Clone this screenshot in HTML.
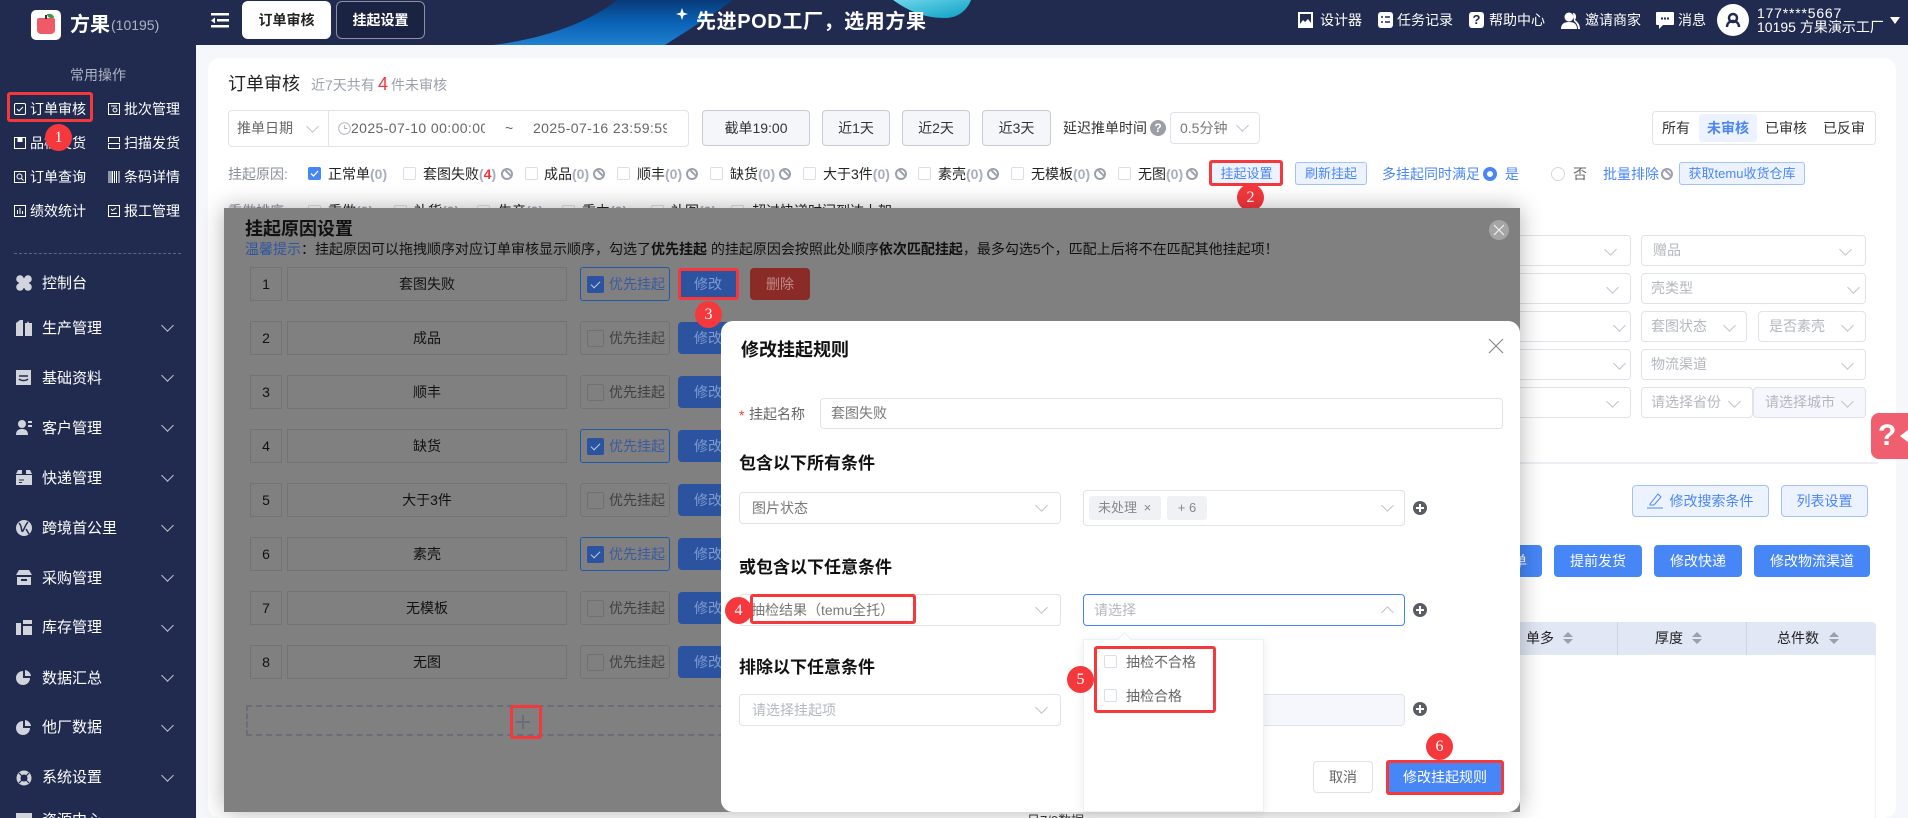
<!DOCTYPE html>
<html lang="zh"><head><meta charset="utf-8"><title>订单审核</title>
<style>
html,body{margin:0;padding:0;width:1908px;height:818px;overflow:hidden;background:#f6f7fb}
body{position:relative;font:14px/20px "Liberation Sans","Noto Sans CJK SC",sans-serif;color:#222}
.a{position:absolute;white-space:nowrap;display:block;box-sizing:border-box}
.w{color:#fff}.g{color:#8a8f9b}
.ch{width:9px;height:9px;border-right:1px solid #c0c4cc;border-bottom:1px solid #c0c4cc;transform:rotate(45deg)}
.up{transform:rotate(225deg)}
.box{border:1px solid #e1e3ea;border-radius:4px;background:#fff}
.ph{color:#b4b7bf}
.cb{width:13px;height:13px;border:1px solid #dcdfe6;border-radius:2px;background:#fff}
.cnt{color:#a7adbd;font-weight:700}
.ban{width:12px;height:12px;border:2px solid #9aa0ac;border-radius:50%;overflow:hidden}
.ban:after{content:"";position:absolute;left:-1px;top:2px;width:12px;height:2px;background:#9aa0ac;transform:rotate(45deg)}
.btn{border:1px solid #c9ccd6;border-radius:4px;background:#f5f6fa;text-align:center;color:#333}
.lb{border:1px solid #a3c2f8;border-radius:3px;background:#edf3fe;color:#4a86f7;text-align:center}
.bb{background:#4686f7;color:#fff;border-radius:4px;text-align:center}
.red{border:3px solid #f4383c;border-radius:3px}
.n{width:27px;height:27px;border-radius:50%;background:#f5383c;color:#fff;text-align:center;font:16px/27px "Liberation Serif",serif}
.m{font-size:15px;color:#fff;line-height:20px}
.mi{background:#d2d4dc}
.rb{border:1px solid #737373;color:#111;text-align:center;line-height:32px}
.ck{border:1px solid #737373;border-radius:3px;width:90px;height:34px}
.ck.on{border-color:#1f5aa6}
.c2{width:17px;height:17px;border:1px solid #707070;border-radius:2px;left:6px;top:8px}
.on .c2{background:#2c539f;border-color:#2c539f}
.on .c2:after{content:"";position:absolute;left:5px;top:2px;width:4px;height:8px;border-right:1px solid #bcd;border-bottom:1px solid #bcd;transform:rotate(45deg)}
.ct{left:28px;top:6px;color:#404040}
.on .ct{color:#3b5aa0}
.mb{background:#2c539f;color:#7f9ad0;border-radius:4px;text-align:center;line-height:32px;height:32px}
.h3{font-size:17px;font-weight:700;color:#111;line-height:24px}
.pl{width:14px;height:14px;border-radius:50%;background:#5a5d66}
.pl:before{content:"";position:absolute;left:3px;top:6px;width:8px;height:2px;background:#fff}
.pl:after{content:"";position:absolute;left:6px;top:3px;width:2px;height:8px;background:#fff}
.so{width:0;height:0;border-left:5px solid transparent;border-right:5px solid transparent;border-bottom:5px solid #9aa0ac}
.so:after{content:"";position:absolute;left:-5px;top:7px;border-left:5px solid transparent;border-right:5px solid transparent;border-top:5px solid #9aa0ac}
</style></head><body>

<!-- card -->
<div class="a" style="left:208px;top:58px;width:1688px;height:760px;background:#fff;border-radius:12px"></div>

<!-- top bar -->
<div class="a" style="left:0;top:0;width:1908px;height:45px;background:#212b50;overflow:hidden">
<svg class="a" style="left:480px;top:0" width="500" height="45" viewBox="0 0 500 45">
<defs><linearGradient id="bg" x1="0" y1="0" x2="0" y2="1"><stop offset="0" stop-color="#083a78"/><stop offset=".5" stop-color="#0a62b5"/><stop offset="1" stop-color="#2080d0"/></linearGradient>
<linearGradient id="tg" x1="0" y1="0" x2="1" y2="1"><stop offset="0" stop-color="#6fd6ea"/><stop offset="1" stop-color="#0aa0c4"/></linearGradient></defs>
<path d="M13 45C70 38 112 20 137 0H253C225 20 205 32 185 45Z" fill="url(#bg)"/>
<path d="M413 0C430 12 445 18 465 18C480 18 488 8 491 0Z" fill="url(#tg)"/>
<path d="M202 8l1.600 4.600 4.400 1.400-4.400 1.400-1.600 4.600-1.600-4.600-4.400-1.400 4.400-1.400Z" fill="#fff"/>
</svg>
<span class="a w" style="left:696px;top:8px;font-size:20px;line-height:28px;font-weight:700;letter-spacing:.6px">先进POD工厂，选用方果</span>
</div>

<!-- sidebar -->
<div class="a" style="left:0;top:0;width:196px;height:818px;background:#212b50;overflow:hidden">
<div class="a" style="left:31px;top:10px;width:30px;height:30px;background:#fff;border-radius:5px"></div>
<div class="a" style="left:37px;top:18px;width:18px;height:16px;background:#ee5b66;border-radius:2px 2px 4px 4px"></div>
<div class="a" style="left:45px;top:15px;width:2px;height:4px;background:#333"></div>
<div class="a" style="left:47px;top:14px;width:7px;height:4px;background:#3a9a4a;border-radius:0 4px 0 4px"></div>
<span class="a w" style="left:70px;top:11px;font-size:20px;line-height:28px;font-weight:700">方果</span>
<span class="a" style="left:111px;top:15px;font-size:14px;color:#aeb3c2">(10195)</span>
<span class="a" style="left:70px;top:65px;color:#aeb3c2">常用操作</span>

<svg class="a" style="left:14px;top:103px" width="12" height="12" fill="none" stroke="#fff"><rect x=".5" y=".5" width="11" height="11" rx="1.500"/><path d="M3 6l2 2 4-4"/></svg>
<span class="a w" style="left:30px;top:99px">订单审核</span>
<svg class="a" style="left:108px;top:103px" width="12" height="12" fill="none" stroke="#fff"><rect x=".5" y=".5" width="11" height="11"/><circle cx="7" cy="7" r="2"/><path d="M3 3h6"/></svg>
<span class="a w" style="left:124px;top:99px">批次管理</span>
<svg class="a" style="left:14px;top:137px" width="12" height="12" fill="none" stroke="#fff"><path d="M.5 .5h11v11H.5z"/><path d="M4 .5v4h4v-4" fill="#fff"/></svg>
<span class="a w" style="left:30px;top:133px">品检发货</span>
<svg class="a" style="left:108px;top:137px" width="12" height="12" fill="none" stroke="#fff"><path d="M.5 5V.5h11V5M.5 7.500v4h11v-4M0 6.500h12"/></svg>
<span class="a w" style="left:124px;top:133px">扫描发货</span>
<svg class="a" style="left:14px;top:171px" width="12" height="12" fill="none" stroke="#fff"><rect x=".5" y=".5" width="11" height="11"/><circle cx="5.500" cy="5.500" r="2.500"/><path d="M7.500 7.500l2 2"/></svg>
<span class="a w" style="left:30px;top:167px">订单查询</span>
<svg class="a" style="left:108px;top:171px" width="12" height="12" stroke="#fff"><path d="M1 0v12M3 0v12M4.500 0v12M6.500 0v12M8.500 0v12M11 0v12"/></svg>
<span class="a w" style="left:124px;top:167px">条码详情</span>
<svg class="a" style="left:14px;top:205px" width="12" height="12" fill="none" stroke="#fff"><rect x=".5" y=".5" width="11" height="11"/><path d="M3.500 9V5M6 9V3M8.500 9V6"/></svg>
<span class="a w" style="left:30px;top:201px">绩效统计</span>
<svg class="a" style="left:108px;top:205px" width="12" height="12" fill="none" stroke="#fff"><rect x=".5" y=".5" width="11" height="11"/><path d="M3 4l1.500 1.500L8 3M3 8.500h6"/></svg>
<span class="a w" style="left:124px;top:201px">报工管理</span>

<div class="a" style="left:14px;top:253px;width:167px;border-top:1px dashed #5d6585"></div>

<svg class="a" style="left:16px;top:275px" width="16" height="16" fill="#d2d4dc"><circle cx="4" cy="4" r="3.800"/><circle cx="12" cy="4" r="3.800"/><circle cx="4" cy="12" r="3.800"/><circle cx="12" cy="12" r="3.800"/><rect x="6" y="3" width="4" height="10"/><rect x="3" y="6" width="10" height="4"/></svg>
<span class="a m" style="left:42px;top:274px">控制台</span>
<svg class="a" style="left:16px;top:320px" width="16" height="16" fill="#d2d4dc"><path d="M0 16V3l4-3h3v16zM9 16V3h2l1-2 1 2h3v13z"/></svg>
<span class="a m" style="left:42px;top:319px">生产管理</span>
<svg class="a" style="left:16px;top:370px" width="16" height="15" fill="#d2d4dc"><path d="M0 0h15v15H0z"/><path d="M3 6h9M3 9c2 2 7 2 9 0" stroke="#212b50" fill="none" stroke-width="1.500"/></svg>
<span class="a m" style="left:42px;top:369px">基础资料</span>
<svg class="a" style="left:16px;top:420px" width="16" height="15" fill="#d2d4dc"><circle cx="6" cy="4" r="4"/><path d="M0 15c0-5 3-6 6-6s6 1 6 6zM12 1h4v2h-4zM12 5h4v2h-4z"/></svg>
<span class="a m" style="left:42px;top:419px">客户管理</span>
<svg class="a" style="left:16px;top:470px" width="16" height="15" fill="#d2d4dc"><path d="M0 4l2-4h4v4zM10 0h4l2 4h-6zM0 5h16v10H0z"/><path d="M3 10h5M3 12.500h3" stroke="#212b50"/></svg>
<span class="a m" style="left:42px;top:469px">快递管理</span>
<svg class="a" style="left:16px;top:520px" width="16" height="16" fill="#d2d4dc"><circle cx="8" cy="8" r="8"/><path d="M3 3c3 3 2 6 3 8s3-6 6-9M10 9l3 5" stroke="#212b50" stroke-width="1.500" fill="none"/></svg>
<span class="a m" style="left:42px;top:519px">跨境首公里</span>
<svg class="a" style="left:16px;top:570px" width="16" height="15" fill="#d2d4dc"><path d="M3 0h10l3 5H0zM1 7h14v8H1z"/><path d="M5 10h6" stroke="#212b50" stroke-width="2"/></svg>
<span class="a m" style="left:42px;top:569px">采购管理</span>
<svg class="a" style="left:16px;top:620px" width="16" height="15" fill="#d2d4dc"><path d="M0 3h5v12H0zM7 0h9v4H7zM7 6h9v9H7z"/></svg>
<span class="a m" style="left:42px;top:618px">库存管理</span>
<svg class="a" style="left:16px;top:670px" width="16" height="15" fill="#d2d4dc"><path d="M7 1v7h7a7 7 0 1 1-7-7zM9 0a7 7 0 0 1 6 6H9z"/></svg>
<span class="a m" style="left:42px;top:669px">数据汇总</span>
<svg class="a" style="left:16px;top:720px" width="16" height="15" fill="#d2d4dc"><path d="M7 1v7h7a7 7 0 1 1-7-7zM9 0a7 7 0 0 1 6 6H9z"/></svg>
<span class="a m" style="left:42px;top:718px">他厂数据</span>
<svg class="a" style="left:16px;top:770px" width="16" height="16" fill="none" stroke="#d2d4dc"><circle cx="8" cy="8" r="5.500" stroke-width="4"/><path d="M3 3l3 3M13 3l-3 3M3 13l3-3M13 13l-3-3" stroke="#212b50" stroke-width="1.200"/></svg>
<span class="a m" style="left:42px;top:768px">系统设置</span>
<div class="a mi" style="left:16px;top:813px;width:16px;height:10px"></div>
<span class="a m" style="left:42px;top:811px">资源中心</span>

<i class="a ch" style="left:163px;top:321px"></i><i class="a ch" style="left:163px;top:371px"></i><i class="a ch" style="left:163px;top:421px"></i><i class="a ch" style="left:163px;top:471px"></i><i class="a ch" style="left:163px;top:521px"></i><i class="a ch" style="left:163px;top:571px"></i><i class="a ch" style="left:163px;top:621px"></i><i class="a ch" style="left:163px;top:671px"></i><i class="a ch" style="left:163px;top:721px"></i><i class="a ch" style="left:163px;top:771px"></i>
</div>
<div class="a red" style="left:7px;top:92px;width:86px;height:30px"></div>
<div class="a n" style="left:45px;top:124px">1</div>

<!-- top nav -->
<svg class="a" style="left:211px;top:13px" width="18" height="15" fill="#fff"><path d="M0 0h18v2.500H0zM6 6h12v2.500H6zM0 12h18v2.500H0zM4 4.500v6L0 7.500z"/></svg>
<div class="a" style="left:242px;top:1px;width:89px;height:38px;background:#fff;border-radius:6px;text-align:center;line-height:38px;font-weight:700;color:#222">订单审核</div>
<div class="a w" style="left:336px;top:1px;width:89px;height:38px;background:#1b2343;border:1px solid #8d91a3;border-radius:6px;text-align:center;line-height:36px;font-weight:700">挂起设置</div>

<svg class="a" style="left:1298px;top:12px" width="15" height="16" fill="#fff"><path d="M0 0h15v16H0z"/><path d="M2 2h11v9l-3-4-3 3-2-2-3 4z" fill="#212b50"/></svg>
<span class="a w" style="left:1320px;top:10px">设计器</span>
<svg class="a" style="left:1378px;top:12px" width="15" height="16" fill="#fff"><rect width="15" height="16" rx="3"/><path d="M3 5h2M3 10h2M7 5h5M7 10h5" stroke="#212b50" stroke-width="1.500"/></svg>
<span class="a w" style="left:1397px;top:10px">任务记录</span>
<div class="a" style="left:1469px;top:12px;width:15px;height:16px;background:#fff;border-radius:3px;color:#212b50;text-align:center;font-weight:700;font-size:13px;line-height:16px">?</div>
<span class="a w" style="left:1489px;top:10px">帮助中心</span>
<svg class="a" style="left:1561px;top:12px" width="20" height="17" fill="#fff"><circle cx="8" cy="5" r="4.500"/><path d="M0 17c0-5 3-7 8-7s8 2 8 7z"/><path d="M12 1c3 0 4 4 2 7 3 2 5 5 5 9h-2c0-4-2-6-4-8" /></svg>
<span class="a w" style="left:1585px;top:10px">邀请商家</span>
<svg class="a" style="left:1656px;top:12px" width="18" height="17" fill="#fff"><path d="M1 0h16a1 1 0 0 1 1 1v11a1 1 0 0 1-1 1H7l-4 4v-4H1a1 1 0 0 1-1-1V1a1 1 0 0 1 1-1z"/><path d="M5 6.500h2M8 6.500h2M11 6.500h2" stroke="#212b50" stroke-width="2"/></svg>
<span class="a w" style="left:1678px;top:10px">消息</span>
<svg class="a" style="left:1717px;top:4px" width="32" height="32"><circle cx="16" cy="16" r="16" fill="#fff"/><circle cx="16" cy="14" r="4" fill="none" stroke="#212b50" stroke-width="2.500"/><path d="M10 23c0-4 3-6 6-6s6 2 6 6" fill="none" stroke="#212b50" stroke-width="2.500"/></svg>
<span class="a w" style="left:1757px;top:3px;letter-spacing:.8px">177****5667</span>
<span class="a w" style="left:1757px;top:17px">10195 方果演示工厂</span>
<svg class="a" style="left:1890px;top:17px" width="10" height="8" fill="#fff"><path d="M0 0h10L5 7z"/></svg>

<!-- header of card -->
<span class="a" style="left:228px;top:72px;font-size:18px;line-height:24px;color:#222">订单审核</span>
<span class="a g" style="left:311px;top:75px;color:#9aa0ae">近7天共有</span>
<span class="a" style="left:378px;top:72px;font-size:18px;line-height:24px;color:#f4343a">4</span>
<span class="a" style="left:391px;top:75px;color:#9aa0ae">件未审核</span>

<div class="a box" style="left:228px;top:110px;width:461px;height:37px"></div>
<div class="a" style="left:328px;top:110px;width:1px;height:37px;background:#e1e3ea"></div>
<span class="a" style="left:237px;top:118px;color:#666">推单日期</span>
<i class="a ch" style="left:308px;top:122px"></i>
<svg class="a" style="left:338px;top:122px" width="13" height="13" fill="none" stroke="#b5b8c0"><circle cx="6.500" cy="6.500" r="5.800"/><path d="M6.500 3v3.500h3"/></svg>
<div class="a" style="left:351px;top:118px;width:134px;overflow:hidden;color:#666;letter-spacing:.4px">2025-07-10 00:00:00</div>
<span class="a" style="left:505px;top:118px;color:#666">~</span>
<div class="a" style="left:533px;top:118px;width:134px;overflow:hidden;color:#666;letter-spacing:.4px">2025-07-16 23:59:59</div>

<div class="a btn" style="left:702px;top:110px;width:108px;height:36px;line-height:34px">截单19:00</div>
<div class="a btn" style="left:822px;top:110px;width:68px;height:36px;line-height:34px">近1天</div>
<div class="a btn" style="left:902px;top:110px;width:68px;height:36px;line-height:34px">近2天</div>
<div class="a btn" style="left:982px;top:110px;width:69px;height:36px;line-height:34px">近3天</div>
<span class="a" style="left:1063px;top:118px;color:#333">延迟推单时间</span>
<div class="a" style="left:1150px;top:120px;width:16px;height:16px;border-radius:50%;background:#9a9ea8;color:#fff;text-align:center;font-size:12px;line-height:16px;font-weight:700">?</div>
<div class="a box" style="left:1170px;top:112px;width:90px;height:32px;line-height:30px;padding-left:9px;color:#777">0.5分钟</div>
<i class="a ch" style="left:1238px;top:121px"></i>

<div class="a box" style="left:1652px;top:111px;width:224px;height:34px"></div>
<div class="a" style="left:1699px;top:114px;width:58px;height:28px;background:#edf3fe;border-radius:3px"></div>
<span class="a" style="left:1662px;top:118px;color:#333">所有</span>
<span class="a" style="left:1707px;top:118px;color:#4a86f7;font-weight:700">未审核</span>
<span class="a" style="left:1765px;top:118px;color:#333">已审核</span>
<span class="a" style="left:1823px;top:118px;color:#333">已反审</span>

<!-- hang reasons -->
<span class="a" style="left:228px;top:164px;color:#8a8f9b">挂起原因:</span>
<div class="a" style="left:308px;top:167px;width:13px;height:13px;background:#4686f7;border-radius:2px"></div>
<svg class="a" style="left:308px;top:167px" width="13" height="13" fill="none" stroke="#fff" stroke-width="1.300"><path d="M3 6.500l2.500 2.500L10 4"/></svg>
<span class="a" style="left:328px;top:164px">正常单<span class="cnt">(0)</span></span>
<i class="a cb" style="left:403px;top:167px"></i><span class="a" style="left:423px;top:164px">套图失败<span class="cnt">(</span><b style="color:#f4343a">4</b><span class="cnt">)</span></span><i class="a ban" style="left:501px;top:168px"></i>
<i class="a cb" style="left:525px;top:167px"></i><span class="a" style="left:544px;top:164px">成品<span class="cnt">(0)</span></span><i class="a ban" style="left:593px;top:168px"></i>
<i class="a cb" style="left:617px;top:167px"></i><span class="a" style="left:637px;top:164px">顺丰<span class="cnt">(0)</span></span><i class="a ban" style="left:686px;top:168px"></i>
<i class="a cb" style="left:710px;top:167px"></i><span class="a" style="left:730px;top:164px">缺货<span class="cnt">(0)</span></span><i class="a ban" style="left:779px;top:168px"></i>
<i class="a cb" style="left:803px;top:167px"></i><span class="a" style="left:823px;top:164px">大于3件<span class="cnt">(0)</span></span><i class="a ban" style="left:895px;top:168px"></i>
<i class="a cb" style="left:918px;top:167px"></i><span class="a" style="left:938px;top:164px">素壳<span class="cnt">(0)</span></span><i class="a ban" style="left:987px;top:168px"></i>
<i class="a cb" style="left:1011px;top:167px"></i><span class="a" style="left:1031px;top:164px">无模板<span class="cnt">(0)</span></span><i class="a ban" style="left:1094px;top:168px"></i>
<i class="a cb" style="left:1118px;top:167px"></i><span class="a" style="left:1138px;top:164px">无图<span class="cnt">(0)</span></span><i class="a ban" style="left:1186px;top:168px"></i>

<div class="a lb" style="left:1211px;top:162px;width:71px;height:23px;line-height:21px;font-size:13px">挂起设置</div>
<div class="a red" style="left:1209px;top:160px;width:74px;height:26px"></div>
<div class="a lb" style="left:1295px;top:162px;width:72px;height:23px;line-height:21px;font-size:13px">刷新挂起</div>
<span class="a" style="left:1382px;top:164px;color:#4a86f7">多挂起同时满足</span>
<div class="a" style="left:1483px;top:167px;width:14px;height:14px;border-radius:50%;border:4px solid #4686f7;background:#fff"></div>
<span class="a" style="left:1505px;top:164px;color:#4a86f7">是</span>
<div class="a" style="left:1551px;top:167px;width:14px;height:14px;border-radius:50%;border:1px solid #d5d8de"></div>
<span class="a" style="left:1573px;top:164px;color:#666">否</span>
<span class="a" style="left:1603px;top:164px;color:#4a86f7">批量排除</span><i class="a ban" style="left:1661px;top:168px"></i>
<div class="a lb" style="left:1679px;top:162px;width:126px;height:23px;line-height:21px;font-size:13px">获取temu收货仓库</div>
<div class="a n" style="left:1237px;top:184px">2</div>

<!-- row 3 peeking above modal -->
<span class="a" style="left:228px;top:201px;color:#8a8f9b">重做排序:</span>
<i class="a cb" style="left:308px;top:205px"></i><span class="a" style="left:328px;top:201px">重做<span class="cnt">(0)</span></span>
<i class="a cb" style="left:394px;top:205px"></i><span class="a" style="left:414px;top:201px">补货<span class="cnt">(0)</span></span>
<i class="a cb" style="left:477px;top:205px"></i><span class="a" style="left:498px;top:201px">生产<span class="cnt">(0)</span></span>
<i class="a cb" style="left:562px;top:205px"></i><span class="a" style="left:582px;top:201px">重力<span class="cnt">(0)</span></span>
<i class="a cb" style="left:651px;top:205px"></i><span class="a" style="left:671px;top:201px">补图<span class="cnt">(0)</span></span>
<i class="a cb" style="left:731px;top:205px"></i><span class="a" style="left:752px;top:201px">超过快递时间到达上架</span>

<!-- right selects -->
<div class="a box" style="left:1500px;top:235px;width:131px;height:31px"></div><i class="a ch" style="left:1606px;top:245px"></i>
<div class="a box" style="left:1500px;top:273px;width:131px;height:31px"></div><i class="a ch" style="left:1608px;top:283px"></i>
<div class="a box" style="left:1500px;top:311px;width:131px;height:31px"></div><i class="a ch" style="left:1615px;top:321px"></i>
<div class="a box" style="left:1500px;top:349px;width:131px;height:31px"></div><i class="a ch" style="left:1615px;top:359px"></i>
<div class="a box" style="left:1500px;top:387px;width:131px;height:31px"></div><i class="a ch" style="left:1608px;top:397px"></i>
<div class="a box ph" style="left:1641px;top:235px;width:225px;height:31px;line-height:29px;padding-left:11px">赠品</div><i class="a ch" style="left:1841px;top:245px"></i>
<div class="a box ph" style="left:1641px;top:273px;width:225px;height:31px;line-height:29px;padding-left:9px">壳类型</div><i class="a ch" style="left:1849px;top:283px"></i>
<div class="a box ph" style="left:1641px;top:311px;width:106px;height:31px;line-height:29px;padding-left:9px">套图状态</div><i class="a ch" style="left:1725px;top:321px"></i>
<div class="a box ph" style="left:1758px;top:311px;width:108px;height:31px;line-height:29px;padding-left:10px">是否素壳</div><i class="a ch" style="left:1843px;top:321px"></i>
<div class="a box ph" style="left:1641px;top:349px;width:225px;height:31px;line-height:29px;padding-left:9px">物流渠道</div><i class="a ch" style="left:1843px;top:359px"></i>
<div class="a box ph" style="left:1641px;top:387px;width:112px;height:31px;line-height:29px;padding-left:9px">请选择省份</div><i class="a ch" style="left:1730px;top:397px"></i>
<div class="a box ph" style="left:1753px;top:387px;width:113px;height:31px;line-height:29px;padding-left:11px;background:#f5f7fd">请选择城市</div><i class="a ch" style="left:1843px;top:397px"></i>

<div class="a" style="left:1871px;top:413px;width:37px;height:46px;background:#f05f70;border-radius:8px 0 0 8px"></div>
<span class="a w" style="left:1878px;top:420px;font-size:30px;line-height:32px;font-weight:700">?</span>
<svg class="a" style="left:1900px;top:430px" width="8" height="12" fill="#fff"><path d="M8 0v12L0 6z"/></svg>

<div class="a" style="left:1500px;top:462px;width:378px;height:2px;background:#eceef3"></div>

<div class="a lb" style="left:1632px;top:485px;width:137px;height:32px;line-height:30px;padding-left:22px;border-radius:4px;font-size:14px">修改搜索条件</div>
<svg class="a" style="left:1647px;top:492px" width="17" height="17" fill="none" stroke="#4a86f7"><path d="M3 12L11 2l3 3-7 8H3zM0 16h16"/></svg>
<div class="a lb" style="left:1781px;top:485px;width:87px;height:32px;line-height:30px;border-radius:4px;font-size:14px">列表设置</div>

<div class="a bb" style="left:1480px;top:545px;width:62px;height:32px;line-height:32px;text-align:right;padding-right:15px">订单</div>
<div class="a bb" style="left:1554px;top:545px;width:88px;height:32px;line-height:32px">提前发货</div>
<div class="a bb" style="left:1654px;top:545px;width:88px;height:32px;line-height:32px">修改快递</div>
<div class="a bb" style="left:1754px;top:545px;width:116px;height:32px;line-height:32px">修改物流渠道</div>

<div class="a" style="left:1500px;top:622px;width:376px;height:33px;background:#e1e7f5;border-radius:0 4px 0 0"></div>
<div class="a" style="left:1617px;top:622px;width:1px;height:33px;background:#cdd4e6"></div>
<div class="a" style="left:1746px;top:622px;width:1px;height:33px;background:#cdd4e6"></div>
<div class="a" style="left:1875px;top:655px;width:1px;height:163px;background:#eceef3"></div>
<span class="a" style="left:1526px;top:628px;color:#222">单多</span><i class="a so" style="left:1563px;top:632px"></i>
<span class="a" style="left:1655px;top:628px;color:#222">厚度</span><i class="a so" style="left:1692px;top:632px"></i>
<span class="a" style="left:1777px;top:628px;color:#222">总件数</span><i class="a so" style="left:1829px;top:632px"></i>

<!-- modal 1 -->
<div class="a" style="left:224px;top:208px;width:1296px;height:604px;background:#808080;box-shadow:0 0 22px rgba(0,0,0,.3);overflow:hidden">
<span class="a" style="left:21px;top:9px;font-size:18px;line-height:24px;font-weight:700;color:#111">挂起原因设置</span>
<span class="a" style="left:21px;top:31px;color:#111"><span style="color:#2f55a0">温馨提示</span>：挂起原因可以拖拽顺序对应订单审核显示顺序，勾选了<b>优先挂起</b> 的挂起原因会按照此处顺序<b>依次匹配挂起</b>，最多勾选5个，匹配上后将不在匹配其他挂起项！</span>
<div class="a" style="left:1265px;top:12px;width:20px;height:20px;border-radius:50%;background:#a5a5a5"></div>
<svg class="a" style="left:1265px;top:12px" width="20" height="20" stroke="#f0f0f0" stroke-width="1.200"><path d="M5 5l10 10M15 5L5 15"/></svg>

<div class="a rb" style="left:26px;top:59px;width:32px;height:34px">1</div><div class="a rb" style="left:63px;top:59px;width:280px;height:34px">套图失败</div>
<div class="a ck on" style="left:356px;top:59px"><i class="a c2"></i><span class="a ct">优先挂起</span></div><div class="a mb" style="left:454px;top:60px;width:60px">修改</div><div class="a" style="left:526px;top:60px;width:60px;height:32px;background:#8b2b28;border-radius:4px;color:#c08a88;text-align:center;line-height:32px">删除</div>

<div class="a rb" style="left:26px;top:113px;width:32px;height:34px">2</div><div class="a rb" style="left:63px;top:113px;width:280px;height:34px">成品</div>
<div class="a ck" style="left:356px;top:113px"><i class="a c2"></i><span class="a ct">优先挂起</span></div><div class="a mb" style="left:454px;top:114px;width:60px">修改</div>

<div class="a rb" style="left:26px;top:167px;width:32px;height:34px">3</div><div class="a rb" style="left:63px;top:167px;width:280px;height:34px">顺丰</div>
<div class="a ck" style="left:356px;top:167px"><i class="a c2"></i><span class="a ct">优先挂起</span></div><div class="a mb" style="left:454px;top:168px;width:60px">修改</div>

<div class="a rb" style="left:26px;top:221px;width:32px;height:34px">4</div><div class="a rb" style="left:63px;top:221px;width:280px;height:34px">缺货</div>
<div class="a ck on" style="left:356px;top:221px"><i class="a c2"></i><span class="a ct">优先挂起</span></div><div class="a mb" style="left:454px;top:222px;width:60px">修改</div>

<div class="a rb" style="left:26px;top:275px;width:32px;height:34px">5</div><div class="a rb" style="left:63px;top:275px;width:280px;height:34px">大于3件</div>
<div class="a ck" style="left:356px;top:275px"><i class="a c2"></i><span class="a ct">优先挂起</span></div><div class="a mb" style="left:454px;top:276px;width:60px">修改</div>

<div class="a rb" style="left:26px;top:329px;width:32px;height:34px">6</div><div class="a rb" style="left:63px;top:329px;width:280px;height:34px">素壳</div>
<div class="a ck on" style="left:356px;top:329px"><i class="a c2"></i><span class="a ct">优先挂起</span></div><div class="a mb" style="left:454px;top:330px;width:60px">修改</div>

<div class="a rb" style="left:26px;top:383px;width:32px;height:34px">7</div><div class="a rb" style="left:63px;top:383px;width:280px;height:34px">无模板</div>
<div class="a ck" style="left:356px;top:383px"><i class="a c2"></i><span class="a ct">优先挂起</span></div><div class="a mb" style="left:454px;top:384px;width:60px">修改</div>

<div class="a rb" style="left:26px;top:437px;width:32px;height:34px">8</div><div class="a rb" style="left:63px;top:437px;width:280px;height:34px">无图</div>
<div class="a ck" style="left:356px;top:437px"><i class="a c2"></i><span class="a ct">优先挂起</span></div><div class="a mb" style="left:454px;top:438px;width:60px">修改</div>

<div class="a" style="left:22px;top:497px;width:800px;height:31px;border:2px dashed #6a6e78"></div>
<svg class="a" style="left:292px;top:507px" width="14" height="14" fill="#6a6e78"><path d="M6 0h2v6h6v2H8v6H6V8H0V6h6z"/></svg>
</div>
<div class="a red" style="left:678px;top:268px;width:61px;height:32px"></div>
<div class="a n" style="left:695px;top:301px">3</div>
<div class="a red" style="left:510px;top:705px;width:32px;height:34px"></div>

<!-- text below modal 2 -->
<span class="a" style="left:1027px;top:811px;color:#333;font-size:13px">日7/0数据</span>

<!-- modal 2 -->
<div class="a" style="left:721px;top:321px;width:799px;height:491px;background:#fff;border-radius:12px">
<span class="a" style="left:20px;top:17px;font-size:18px;line-height:24px;font-weight:700;color:#111">修改挂起规则</span>
<svg class="a" style="left:767px;top:17px" width="16" height="16" stroke="#888" stroke-width="1.200"><path d="M1 1l14 14M15 1L1 15"/></svg>
<span class="a" style="left:18px;top:84px;color:#f33">*</span>
<span class="a" style="left:28px;top:83px;color:#666">挂起名称</span>
<div class="a box" style="left:99px;top:77px;width:683px;height:31px;line-height:29px;padding-left:10px;color:#777">套图失败</div>
<span class="a h3" style="left:18px;top:131px">包含以下所有条件</span>
<div class="a box" style="left:18px;top:171px;width:322px;height:32px;line-height:30px;padding-left:12px;color:#777">图片状态</div><i class="a ch" style="left:316px;top:180px"></i>
<div class="a box" style="left:362px;top:169px;width:322px;height:36px"></div>
<div class="a" style="left:368px;top:175px;width:72px;height:24px;background:#f0f1f5;border-radius:3px;color:#888;line-height:24px;padding-left:9px;font-size:13px">未处理 <span style="margin-left:3px">×</span></div>
<div class="a" style="left:446px;top:175px;width:40px;height:24px;background:#f0f1f5;border-radius:3px;color:#888;line-height:24px;text-align:center;font-size:13px">+ 6</div>
<i class="a ch" style="left:662px;top:180px"></i>
<i class="a pl" style="left:692px;top:180px"></i>

<span class="a h3" style="left:18px;top:235px">或包含以下任意条件</span>
<div class="a box" style="left:18px;top:273px;width:322px;height:32px;line-height:30px;padding-left:11px;color:#777">抽检结果（temu全托）</div><i class="a ch" style="left:316px;top:282px"></i>
<div class="a box ph" style="left:362px;top:273px;width:322px;height:32px;line-height:30px;padding-left:10px;border-color:#4686f7">请选择</div><i class="a ch up" style="left:662px;top:287px"></i>
<i class="a pl" style="left:692px;top:282px"></i>

<span class="a h3" style="left:18px;top:335px">排除以下任意条件</span>
<div class="a box ph" style="left:18px;top:373px;width:322px;height:32px;line-height:30px;padding-left:12px">请选择挂起项</div><i class="a ch" style="left:316px;top:382px"></i>
<div class="a box" style="left:362px;top:373px;width:322px;height:32px;background:#f5f7fd"></div>
<i class="a pl" style="left:692px;top:381px"></i>

<div class="a box" style="left:592px;top:440px;width:60px;height:32px;line-height:30px;text-align:center;color:#666">取消</div>
<div class="a bb" style="left:667px;top:441px;width:114px;height:30px;line-height:30px;font-size:14px;border-radius:2px">修改挂起规则</div>

<!-- dropdown -->
<div class="a" style="left:362px;top:318px;width:181px;height:173px;background:#fff;border:1px solid #eef0f4;box-shadow:0 2px 10px rgba(0,0,0,.08)"></div>
<div class="a" style="left:399px;top:313px;width:9px;height:9px;background:#fff;border-left:1px solid #eef0f4;border-top:1px solid #eef0f4;transform:rotate(45deg)"></div>
<i class="a cb" style="left:383px;top:334px"></i><span class="a" style="left:405px;top:331px;color:#666">抽检不合格</span>
<i class="a cb" style="left:383px;top:368px"></i><span class="a" style="left:405px;top:365px;color:#666">抽检合格</span>
</div>
<div class="a red" style="left:750px;top:594px;width:166px;height:30px"></div>
<div class="a n" style="left:725px;top:597px">4</div>
<div class="a red" style="left:1094px;top:646px;width:122px;height:67px"></div>
<div class="a n" style="left:1067px;top:666px">5</div>
<div class="a red" style="left:1386px;top:760px;width:118px;height:35px"></div>
<div class="a n" style="left:1426px;top:733px">6</div>
</body></html>
